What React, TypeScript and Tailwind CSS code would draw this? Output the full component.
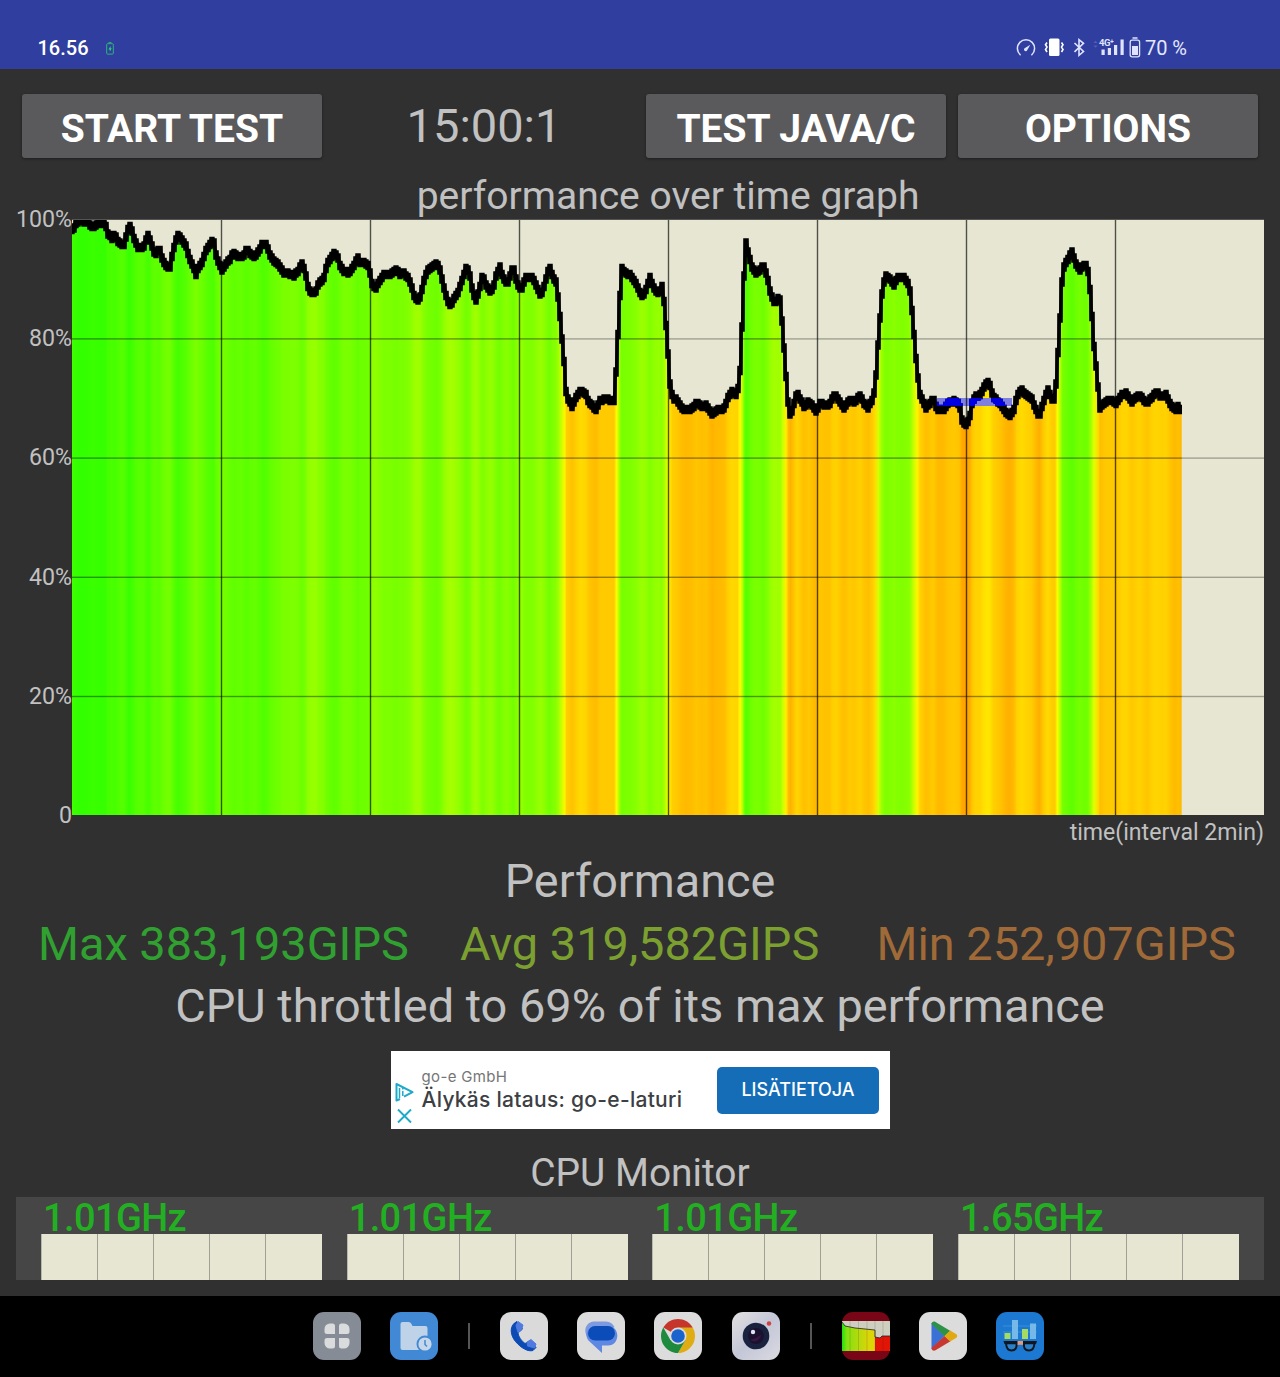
import type { ReactNode } from 'react'

type Point = [number, number]

// chart space: 1192 x 596, one vertical line every 149 units (2 min)
const CHART_W = 1192
const CHART_H = 596

// samples taken in page units * 3, grouped by the segment they were recorded in
const segments: { x: number; y: number; points: Point[] }[] = [
  {
    x: 0,
    y: 210,
    points: [
      [218, 60], [228, 42], [240, 32], [262, 36], [278, 52], [290, 44], [305, 38], [316, 40], [322, 68], [335, 85],
      [346, 74], [352, 92], [362, 103], [374, 102], [380, 70], [388, 46], [398, 70], [405, 95], [415, 115], [430, 112],
      [437, 95], [443, 73], [452, 95], [460, 125], [470, 130], [478, 116], [488, 150], [500, 172], [510, 170],
      [520, 120], [527, 90], [535, 73], [545, 90], [558, 110], [568, 145], [580, 170], [588, 194], [596, 170],
      [608, 155], [618, 120], [628, 105], [640, 90], [648, 135], [658, 165], [666, 180], [675, 165], [688, 150],
      [700, 130], [712, 140], [725, 140], [735, 130], [740, 116], [752, 135], [765, 142], [778, 120], [788, 100],
      [800, 106], [812, 140], [830, 160], [843, 172], [850, 190], [868, 190], [880, 198], [893, 185],
    ],
  },
  {
    x: 300,
    y: 230,
    points: [
      [5, 98], [15, 120], [25, 175], [35, 190], [48, 185], [58, 155], [70, 150], [80, 105], [92, 85], [102, 72],
      [112, 78], [120, 105], [133, 125], [145, 128], [158, 115], [168, 95], [172, 78], [180, 98], [195, 100],
      [207, 110], [215, 160], [226, 176], [240, 150], [252, 135], [265, 135], [278, 130], [290, 118], [300, 132],
      [312, 130], [325, 145], [335, 170], [345, 205], [358, 210], [366, 180], [373, 145], [385, 120], [400, 108],
      [410, 98], [420, 120], [432, 175], [440, 205], [452, 227], [462, 205], [475, 185], [487, 150], [500, 110],
      [510, 140], [518, 185], [527, 214], [535, 190], [548, 133], [558, 165], [572, 187], [582, 165], [590, 130],
      [600, 113], [610, 145], [622, 160], [632, 130], [640, 110], [648, 145], [655, 170], [665, 178], [675, 145],
      [685, 140], [698, 142], [708, 165], [722, 197], [733, 165], [748, 108], [758, 140], [768, 155], [775, 210],
      [783, 290], [795, 430], [799, 500], [816, 528], [830, 500], [842, 480], [856, 490], [868, 520], [888, 538],
      [900, 510], [920, 508],
    ],
  },
  {
    x: 540,
    y: 230,
    points: [
      [222, 512], [230, 400], [238, 230], [245, 114], [255, 130], [270, 135], [285, 155], [295, 175], [307, 200],
      [320, 175], [330, 143], [342, 175], [355, 190], [366, 170], [373, 220], [382, 340], [390, 460], [398, 505],
      [410, 510], [425, 535], [440, 540], [455, 535], [470, 520], [485, 530], [500, 525], [516, 552], [530, 540],
      [545, 538], [555, 530], [562, 505], [575, 486], [592, 495], [600, 420], [608, 250], [613, 110], [618, 38],
      [625, 70], [635, 110], [648, 130], [660, 120], [670, 106], [680, 135], [692, 190], [703, 218], [715, 205],
      [722, 213], [728, 300], [738, 440], [746, 540], [752, 557], [762, 520], [771, 490], [782, 510], [793, 532],
      [806, 513], [818, 530], [828, 545], [840, 520], [855, 525], [868, 525], [880, 500], [890, 498],
    ],
  },
  {
    x: 840,
    y: 230,
    points: [
      [0, 515], [12, 532], [28, 508], [42, 518], [60, 498], [72, 520], [85, 533], [98, 505], [105, 480], [115, 330],
      [125, 200], [135, 138], [150, 145], [162, 165], [172, 145], [190, 142], [205, 160], [212, 190], [220, 290],
      [232, 430], [240, 495], [258, 533], [270, 520], [280, 508], [293, 540], [310, 540], [325, 520], [345, 512],
      [358, 525], [366, 570], [378, 585], [388, 570], [396, 520], [405, 498], [420, 495], [435, 465], [447, 458],
      [460, 500], [480, 520], [495, 545], [508, 558], [522, 540], [530, 500], [545, 480], [560, 495], [575, 505],
      [588, 540], [598, 562], [608, 520], [624, 478], [635, 505], [645, 510], [652, 400], [662, 230], [668, 120],
      [680, 95], [696, 66], [708, 100], [720, 122], [735, 100], [743, 113], [752, 200], [762, 350], [775, 480],
      [780, 535], [795, 515], [815, 510], [830, 520], [845, 495], [858, 490], [875, 515], [898, 495], [922, 520],
      [940, 495], [950, 488], [965, 500], [978, 495], [990, 520], [1005, 540], [1015, 528], [1025, 545],
    ],
  },
]

const samples: Point[] = segments.flatMap((s) =>
  s.points.map(([px, py]): Point => [s.x + px / 3 - 72, s.y + py / 3 - 219])
)
const first = samples[0]
const last = samples[samples.length - 1]

// readings are held for two units, which gives the trace its stair look
const stepped: Point[] = []
for (let x = 0; x < last[0]; x += 2) {
  const next = samples.findIndex((p) => p[0] > x)
  const a = samples[Math.max(next - 1, 0)]
  const b = samples[next]
  const t = b[0] === a[0] ? 0 : (x - a[0]) / (b[0] - a[0])
  const y = Math.round((a[1] + (b[1] - a[1]) * t) / 1.5) * 1.5
  stepped.push([x - 0.9, y], [x + 0.9, y])
}

const toPath = (pts: Point[]) => pts.map(([x, y]) => `${x.toFixed(1)},${y.toFixed(1)}`).join('L')
const areaPath = `M0,${CHART_H}L0,${first[1]}L${toPath(samples)}L${last[0]},${CHART_H}Z`
// the trace is thicker vertically than horizontally
const tracePath = `M${toPath(stepped.map(([x, y]): Point => [x, y - 2.9]))}L${toPath(
  stepped.map(([x, y]): Point => [x, y + 2.9]).reverse()
)}Z`

const colorFor = (y: number) => {
  const value = 100 - (y / CHART_H) * 100
  if (value >= 75) return `rgb(${Math.round(255 - (value - 75) * 8.3)},255,0)`
  return `rgb(255,${Math.round(255 - (75 - value) * 9.8)},0)`
}

const Chart = () => (
  <svg width={CHART_W} height={CHART_H} viewBox={`0 0 ${CHART_W} ${CHART_H}`} className="block bg-[#e6e6d2]">
    <defs>
      <linearGradient id="heat" gradientUnits="userSpaceOnUse" x1={0} x2={last[0]} y1={0} y2={0}>
        {samples.map(([x, y], i) => (
          <stop key={i} offset={x / last[0]} stopColor={colorFor(y)} />
        ))}
      </linearGradient>
      <clipPath id="throttle">
        <rect x={865} y={179} width={75} height={8} />
      </clipPath>
      <clipPath id="area">
        <path d={areaPath} />
      </clipPath>
      <clipPath id="recorded">
        <rect x={0} y={0} width={1110} height={CHART_H} />
      </clipPath>
    </defs>
    {[1, 2, 3, 4].map((i) => (
      <rect key={i} x={0} y={i * 119.2} width={CHART_W} height={1.4} fill="#000" fillOpacity={0.3} />
    ))}
    <path d={areaPath} fill="url(#heat)" />
    <rect x={865} y={179} width={75} height={8} fill="#7f7fe0" />
    <g clipPath="url(#recorded)">
      <path d={tracePath} fill="#000" stroke="#000" strokeWidth={3.8} strokeLinejoin="miter" />
    </g>
    <path
      d={tracePath}
      fill="#0000e0"
      stroke="#0000e0"
      strokeWidth={3.8}
      strokeLinejoin="miter"
      clipPath="url(#throttle)"
    />
    {[1, 2, 3, 4].map((i) => (
      <rect
        key={i}
        x={0}
        y={i * 119.2}
        width={CHART_W}
        height={1.4}
        fill="#000"
        fillOpacity={0.4}
        clipPath="url(#area)"
      />
    ))}
    {[1, 2, 3, 4, 5, 6, 7].map((i) => (
      <rect key={i} x={i * 149 - 0.2} y={0} width={1.4} height={CHART_H} fill="#000" fillOpacity={0.65} />
    ))}
    <rect x={0} y={0} width={CHART_W} height={1} fill="#555" />
  </svg>
)

const StatusIcons = () => (
  <svg width={131} height={24} viewBox="0 0 131 24" fill="none" className="block">
    {/* speed */}
    <path d="M6.2 18.7A8.600 8.600 0 1 1 17.800 18.700" stroke="#dfe3ff" strokeWidth={1.5} strokeLinecap="round" />
    <path d="M16.3 8.700 13.300 14.100a1.700 1.700 0 1 1-2.300-2.100Z" fill="#dfe3ff" />
    {/* vibrate */}
    <rect x={35} y={2.5} width={10.5} height={17.5} rx={1.5} fill="#fff" />
    <path
      d="M33 6.500l-1.500 2.200 1.500 2.400-1.500 2.400L33 16M47.500 6.500l1.500 2.200-1.500 2.400 1.500 2.400-1.500 2.500"
      stroke="#fff"
      strokeWidth={1.6}
    />
    {/* bluetooth */}
    <path d="M60.500 7l9 8.500-4.500 3.800V3.700l4.500 3.600-9 8.500" stroke="#dfe3ff" strokeWidth={1.6} />
    {/* mobile data */}
    <path d="M79.500 7l2-2.300 2 2.300zM79.500 9.500l2 2.200 2-2.200z" fill="#4f5fc0" />
    <path d="M87.500 13.500h3.200v5.500h-3.200zM93.800 12H97V19h-3.200zM100 9h3.200v10H100zM106.500 3.500h3.200V19h-3.200z" fill="#dfe3ff" />
    <text
      x={85}
      y={9.5}
      fontSize={9.5}
      fontWeight={700}
      letterSpacing={-0.5}
      fill="#dfe3ff"
      stroke="#303f9f"
      strokeWidth={1}
      paintOrder="stroke"
      className="font-[Roboto]"
    >
      4G⁺
    </text>
    {/* battery */}
    <path d="M118.500 2h5" stroke="#dfe3ff" strokeWidth={1.5} />
    <rect x={116.2} y={4.2} width={9.4} height={16.600} rx={2} stroke="#dfe3ff" strokeWidth={1.3} />
    <rect x={118} y={10} width={6} height={9} fill="#dfe3ff" />
  </svg>
)

const StatusBar = () => (
  <header className="flex h-[69px] items-end justify-between bg-[#303f9f] pb-[9px] pl-[37.500px] pr-[93px] text-white">
    <div className="flex items-center gap-[17px]">
      <span className="text-[20px] leading-6 font-medium">16.56</span>
      <svg width={8} height={13} viewBox="0 0 8 13" fill="none">
        <rect x={0.7} y={1.7} width={6.6} height={10.4} rx={0.8} stroke="#2fb37c" />
        <path d="M2.5.6h3" stroke="#2fb37c" />
        <path d="M4.6 4 2.4 7.4h1.4v2.4l2-3.5H4.6z" fill="#2fd07c" />
      </svg>
    </div>
    <div className="flex items-center">
      <StatusIcons />
      <span className="pt-px text-[20px] leading-6 text-[#e4e7ff]">70 %</span>
    </div>
  </header>
)

const Button = ({ children }: { children: ReactNode }) => (
  <button className="h-16 w-[300px] rounded-[3px] bg-[#5a5a5c] pt-1 text-[39px] leading-[62px] font-bold whitespace-nowrap text-white shadow-[0_1px_3px_rgba(0,0,0,0.4)]">
    {children}
  </button>
)

const Ad = () => (
  <section className="flex h-[78px] w-[499px] items-center bg-white pr-[10.5px] font-[Inter]">
    <div className="flex w-[31px] flex-col items-start gap-[5px] pt-[27px] pl-[3px]">
      <svg width={20} height={20} viewBox="0 0 20 20" fill="none" stroke="#1fa9c9" strokeWidth={2}>
        <path d="M6 17 2.500 18.500V2L18.500 10.200 10 14.600" strokeLinejoin="round" />
        <path d="M5.500 6v10M8.800 9v5M8.800 6v1.600" strokeWidth={1.500} />
      </svg>
      <svg width={18} height={18} viewBox="0 0 18 18" stroke="#1fa9c9" strokeWidth={1.9}>
        <path d="M4 2.500l13 13M17 2.500L4 15.500" />
      </svg>
    </div>
    <div className="flex flex-1 flex-col pb-0.5 whitespace-nowrap">
      <span className="text-[15px] leading-[20px] tracking-[0.35px] text-[#757575]">go-e GmbH</span>
      <span className="text-[21px] leading-[25px] font-medium tracking-[0.28px] text-[#3c4043]">
        Älykäs lataus: go-e-laturi
      </span>
    </div>
    <button className="h-[47px] w-[162px] rounded-[5px] bg-[#156db8] pb-0.5 text-[18px] font-medium text-white">
      LISÄTIETOJA
    </button>
  </section>
)

const Core = ({ freq }: { freq: string }) => (
  <div className="flex w-[281px] flex-col">
    <span className="h-[37px] pl-[2px] text-[38px] leading-[42px] font-medium tracking-[-0.600px] text-[#22b022]">
      {freq}
    </span>
    <div className="grid h-[46px] grid-cols-5 border-l border-[#b8b8ac] divide-x divide-[#a0a096] bg-[#e6e6d2]">
      {[0, 1, 2, 3, 4].map((i) => (
        <div key={i} />
      ))}
    </div>
  </div>
)

const icons: Record<string, ReactNode> = {
  apps: (
    <>
      <rect width={48} height={48} rx={11} fill="#868c96" />
      <path
        d="M17 11.500H19.500Q22 11.500 22 14V22H14Q11.500 22 11.500 19.500V17A5.500 5.500 0 0 1 17 11.500zM31 11.500A5.500 5.500 0 0 1 36.500 17V19.500Q36.500 22 34 22H26V14Q26 11.500 28.500 11.500zM14 26H22V34Q22 36.500 19.500 36.500H17A5.500 5.500 0 0 1 11.500 31V28.500Q11.500 26 14 26zM26 26H34Q36.500 26 36.500 28.500V31A5.500 5.500 0 0 1 31 36.500H28.500Q26 36.500 26 34z"
        fill="#dadbdd"
      />
    </>
  ),
  files: (
    <>
      <rect width={48} height={48} rx={11} fill="#4189d4" />
      <path d="M10.500 12q0-2 2-2h6q2 0 3 2l1 2h13q2 0 2 2v20q0 2-2 2H12.500q-2 0-2-2z" fill="#bed2e8" />
      <circle cx={35} cy={32} r={8.500} fill="#4189d4" />
      <circle cx={35} cy={32} r={6.600} fill="#c6d7ea" />
      <path d="M35 28v4.500l2 2" stroke="#4189d4" strokeWidth={1.500} fill="none" />
    </>
  ),
  phone: (
    <>
      <rect width={48} height={48} rx={11} fill="#dadada" />
      <path
        d="M17 9.500C9 13 10 23 15.500 29.500S28 40 33 38.500L36 35.500 30 29 25 31.500C21.500 29 18.500 25 18 21L22.500 17z"
        fill="#0b4bb3"
        stroke="#0b4bb3"
        strokeLinejoin="round"
      />
      <path
        d="M18 9.500l5 3.500-1.500 5-3.500 2.500-2-7zM27 30l4-2.500 5 4.500-1.500 4-7-2z"
        fill="#4f7be0"
        stroke="#4f7be0"
        strokeLinejoin="round"
      />
    </>
  ),
  messages: (
    <>
      <rect width={48} height={48} rx={11} fill="#dcdcdc" />
      <path d="M17 9.500h12a10 10 0 0 1 8.500 5.500L15 28.500C6 25 5.500 10.500 17 9.500z" fill="#7d9ae0" />
      <path d="M19 14h12c12.500 0 12.500 19.500 0 19.500h-6v7.500L12 29C6 22 12 14 19 14z" fill="#5f88e3" />
      <rect x={11} y={14} width={27} height={14.500} rx={7.200} fill="#0b4cb8" />
    </>
  ),
  chrome: (
    <>
      <rect width={48} height={48} rx={11} fill="#dcdcdc" />
      <path d="M24 24 9.300 15.500A17 17 0 0 1 38.700 15.500z" fill="#c5352b" />
      <path d="M24 24V15.500h14.700A17 17 0 0 1 24 41l7.400-12.700z" fill="#dfac14" />
      <path d="M24 24l7.400 4.300L24 41A17 17 0 0 1 9.300 15.500l7.300 12.800z" fill="#1d8a3d" />
      <circle cx={24} cy={24} r={8.500} fill="#dcdcdc" />
      <circle cx={24} cy={24} r={6.800} fill="#1b63cc" />
    </>
  ),
  camera: (
    <>
      <defs>
        <linearGradient id="cam" x1={0} y1={0} x2={1} y2={1}>
          <stop offset={0} stopColor="#e2e0e0" />
          <stop offset={0.5} stopColor="#c4c7d8" />
          <stop offset={1} stopColor="#dadae0" />
        </linearGradient>
      </defs>
      <rect width={48} height={48} rx={11} fill="url(#cam)" />
      <circle cx={24} cy={24} r={13.300} fill="#19233f" />
      <circle cx={24} cy={24} r={8} fill="#1b1230" />
      <path d="M18 28a7 7 0 0 0 11-5l-5 3z" fill="#3a1740" />
      <circle cx={21} cy={20} r={2.200} fill="#dfe6f2" />
      <circle cx={37} cy={11.500} r={2.200} fill="#d24040" />
    </>
  ),
  throttling: (
    <>
      <defs>
        <clipPath id="thr">
          <rect width={48} height={48} rx={11} />
        </clipPath>
        <linearGradient id="thrFill">
          <stop offset={0} stopColor="#22e010" />
          <stop offset={0.150} stopColor="#86e010" />
          <stop offset={0.800} stopColor="#dcd508" />
        </linearGradient>
      </defs>
      <g clipPath="url(#thr)">
        <rect width={48} height={48} fill="#780616" />
        <rect y={9} width={48} height={30} fill="#cfcfc0" />
        <path d="M0 10l3 4 10 2 20 2v21H0z" fill="url(#thrFill)" />
        <path d="M33 25l5 1 2-2h8v15H33z" fill="#e11405" />
        <path d="M0 10l3 4 10 2 20 2v7l5 1 2-2h8" stroke="#222" strokeWidth={0.800} fill="none" />
        <path d="M8 9v30M16.500 9v30M25 9v30M33 9v30M41 9v30" stroke="#333" strokeOpacity={0.350} strokeWidth={0.500} />
      </g>
    </>
  ),
  play: (
    <>
      <rect width={48} height={48} rx={11} fill="#dcdcdc" />
      <path d="M12.500 11v26l13-13z" fill="#3b70d6" />
      <path d="M12.500 12c0-2 2-3 4-2l15 9-6 5.500z" fill="#2d9247" />
      <path d="M12.500 36c0 2 2 3.500 4 2.300l15-9-6-5.300z" fill="#c8382f" />
      <path d="M31 18.500l6 3.500q2.500 2 0 4l-6 3.500-5.500-5.500z" fill="#e0a911" />
    </>
  ),
  bench: (
    <>
      <rect width={48} height={48} rx={11} fill="#1c78d0" />
      <path d="M7 14h34M7 20h34" stroke="#4594dc" strokeWidth={0.800} />
      <path d="M8.500 21h6v6h-6zM26 17h6v10h-6z" fill="#a4dc62" />
      <path d="M16 8h6v19h-6zM34 11.500h6V27h-6z" fill="#74b9e8" />
      <path
        d="M10 31.300H20.500C21 36 19.500 38.500 15.500 38.500S10.500 36 10 31.300zM28 31.300H38.500C38 36 37 38.500 33 38.500S27.500 36 28 31.300z"
        fill="#2b80cc"
        stroke="#10161e"
        strokeWidth={2}
      />
      <path d="M7.500 29h14.500v3H8.500zM26.500 29h14.500l-1 3H26.500z" fill="#10161e" />
      <rect x={21.500} y={29} width={5.500} height={3.800} fill="#e09c78" />
    </>
  ),
}

const AppIcon = ({ name }: { name: string }) => (
  <svg width={48} height={48} viewBox="0 0 48 48" className="block shrink-0">
    {icons[name]}
  </svg>
)

const Divider = () => <div className="mx-px h-[26px] w-[2px] shrink-0 bg-[#555]" />

const Taskbar = () => (
  <nav className="flex h-[81px] items-center gap-[29.1px] bg-black pb-px pl-[313px]">
    <AppIcon name="apps" />
    <AppIcon name="files" />
    <Divider />
    <AppIcon name="phone" />
    <AppIcon name="messages" />
    <AppIcon name="chrome" />
    <AppIcon name="camera" />
    <Divider />
    <AppIcon name="throttling" />
    <AppIcon name="play" />
    <AppIcon name="bench" />
  </nav>
)

const App = () => {
  return (
    <div className="flex h-[1377px] w-[1280px] flex-col overflow-hidden bg-[#303030] font-[Roboto,sans-serif] text-[#c1c1c1]">
      <StatusBar />
      <div className="mt-[25px] flex h-16 items-center pl-[22px]">
        <Button>START TEST</Button>
        <span className="w-[324px] text-center text-[47px] leading-[64px]">15:00:1</span>
        <Button>TEST JAVA/C</Button>
        <div className="w-3" />
        <Button>OPTIONS</Button>
      </div>
      <h2 className="mt-[13px] h-12 pl-[56px] text-center text-[39px] leading-[50px]">performance over time graph</h2>
      <div className="flex h-[596px]">
        <div className="-my-3 flex w-[72px] flex-col justify-between text-right text-[23.200px] leading-6">
          {['100%', '80%', '60%', '40%', '20%', '0'].map((label) => (
            <span key={label}>{label}</span>
          ))}
        </div>
        <Chart />
      </div>
      <p className="mt-px h-[34px] pr-4 text-right text-[23.100px] leading-[34px]">time(interval 2min)</p>
      <h1 className="h-[62px] text-center text-[46.800px] leading-[62px]">Performance</h1>
      <div className="flex h-[63px] pl-[38px] text-[46.900px] leading-[63px] whitespace-nowrap">
        <span className="w-[422px] text-[#30a030]">Max 383,193GIPS</span>
        <span className="w-[416.500px] text-[#7ca030]">Avg 319,582GIPS</span>
        <span className="text-[#a06a38]">Min 252,907GIPS</span>
      </div>
      <p className="h-[61px] text-center text-[46.900px] leading-[61px] whitespace-nowrap">
        CPU throttled to 69% of its max performance
      </p>
      <div className="mt-[15px] flex justify-center">
        <Ad />
      </div>
      <h2 className="mt-[20px] h-12 text-center text-[38.900px] leading-12">CPU Monitor</h2>
      <div className="mx-4 flex h-[83px] justify-between bg-[#464646] px-[25px]">
        {['1.01GHz', '1.01GHz', '1.01GHz', '1.65GHz'].map((freq, i) => (
          <Core key={i} freq={freq} />
        ))}
      </div>
      <div className="flex-1" />
      <Taskbar />
    </div>
  )
}

export default App
